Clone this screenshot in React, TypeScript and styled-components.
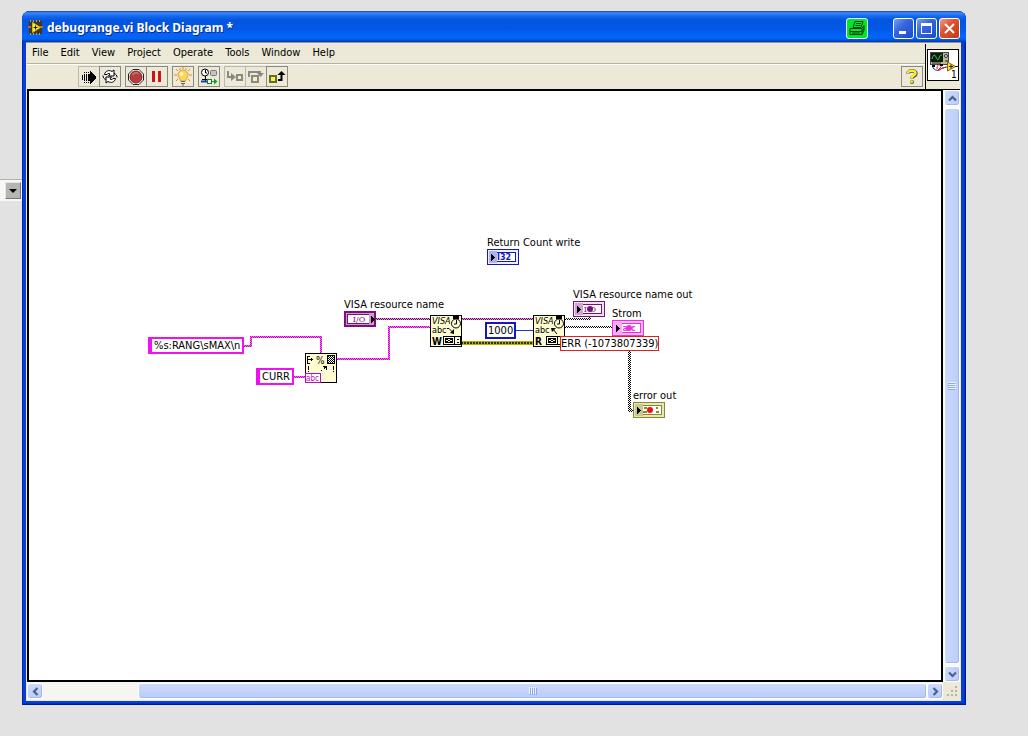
import React from "react";
import styled, { createGlobalStyle, css } from "styled-components";

const Global = createGlobalStyle`
  * { box-sizing: border-box; }
  body { margin: 0; background: #e2e2e2; }
  body, button { font-family: "DejaVu Sans Condensed", Tahoma, Verdana, sans-serif; font-size: 11px; color: #000; }
  button { margin: 0; padding: 0; border: 0; background: none; }
  svg { display: block; }
`;

const Desktop = styled.div`
  display: grid;
  grid-template-columns: 22px minmax(0, 1fr) 62px;
  min-height: 100vh;
  overflow: hidden;
`;

const Behind = styled.aside`
  padding-top: 179px;
`;

const ComboEdge = styled.div`
  display: flex;
  justify-content: flex-end;
  height: 22px;
  padding: 2px 1px 2px 0;
  border-top: 1px solid #b4b2ae;
  background: #f8f8f8;
`;

const ComboButton = styled.button`
  display: grid;
  place-items: center;
  width: 16px;
  height: 17px;
  border: 1px solid #77756f;
  border-top-color: #e8e6e0;
  border-left-color: #e8e6e0;
  background: #b7b5b0;
`;

const Window = styled.main`
  display: flex;
  flex-direction: column;
  margin: 11px 0 31px;
  padding: 0 5px 4px 4px;
  border-radius: 8px 8px 0 0;
  background: #0a3fd6;
  box-shadow: inset 1px 0 #0026b8, inset -1px -1px #001a94, inset -2px -2px #0030c4;
`;

const TitleBar = styled.header`
  display: flex;
  align-items: center;
  height: 31px;
  margin: 0 -5px 0 -4px;
  padding: 3px 6px 0 6px;
  border-radius: 8px 8px 0 0;
  background: linear-gradient(#0a4bc4 0, #3b8bfa 2px, #1768ee 5px, #0355de 9px, #0358e6 18px, #0266fb 25px, #0160f2 28px, #0145c0 30px, #0138a8 31px);
`;

const Title = styled.h1`
  flex: 1;
  margin: 0 0 0 4px;
  color: #fff;
  font: bold 12px/16px "Noto Sans", "Trebuchet MS", sans-serif;
  text-shadow: 1px 1px #0a2a88;
`;

const CaptionButtons = styled.div`
  display: flex;
  gap: 2px;
  margin-left: 25px;
`;

const CaptionButton = styled.button<{ $danger?: boolean }>`
  display: grid;
  place-items: center;
  width: 21px;
  height: 21px;
  border: 1px solid #fff;
  border-radius: 3px;
  background: ${(p) =>
    p.$danger
      ? "linear-gradient(135deg, #f0a088, #dc5433 40%, #c23a16)"
      : "linear-gradient(135deg, #7c9ff2, #3566e0 40%, #1d4bcb)"};
`;

const PrintBadge = styled.button`
  display: grid;
  place-items: center;
  width: 22px;
  height: 21px;
  border: 1px solid #e8ffe8;
  border-radius: 3px;
  background: #00e62c;
`;

const Client = styled.div`
  flex: 1;
  display: flex;
  flex-direction: column;
  padding: 1px;
  background: #ece9d8;
  border-top: 1px solid #8d93a8;
`;

const Head = styled.div`
  display: flex;
  height: 45px;
`;

const Bars = styled.div`
  flex: 1;
  min-width: 0;
`;

const MenuBar = styled.nav`
  display: flex;
  gap: 12px;
  height: 20px;
  padding: 0 5px 1px;
  border-bottom: 1px solid #b5b2a3;
`;

const MenuItem = styled.button`
  line-height: 18px;
  white-space: nowrap;
`;

const ToolBar = styled.div`
  display: flex;
  gap: 4px;
  height: 25px;
  padding: 1px 2px 2px 51px;
  border-top: 1px solid #fff;
`;

const ToolGroup = styled.div<{ $end?: boolean }>`
  display: flex;
  ${(p) => p.$end && css`margin-left: auto;`}
`;

const ToolButton = styled.button<{ $flat?: boolean }>`
  display: grid;
  place-items: center;
  width: 22px;
  height: 21px;
  border: 1px solid ${(p) => (p.$flat ? "#bcb9a9" : "#8c8a7e")};
  & + & { margin-left: -1px; }
`;

const IconPane = styled.div`
  width: 35px;
  padding: 5px 1px;
  border-left: 1px solid #000;
`;

const ViIcon = styled.div`
  height: 32px;
  border: 1px solid #000;
  background: #fff;
`;

const Work = styled.div`
  flex: 1;
  display: grid;
  grid-template-columns: minmax(0, 1fr) 17px;
  grid-template-rows: minmax(0, 1fr) 18px;
`;

const Canvas = styled.section`
  position: relative;
  min-height: 340px;
  overflow: hidden;
  border: 2px solid #000;
  background: #fff;
`;

const VBar = styled.div`
  display: grid;
  grid-template-rows: 16px 1fr 16px;
  gap: 2px;
  padding-left: 1px;
  background: #f8f8f4;
  border-top: 1px solid #000;
`;

const HBar = styled.div`
  display: grid;
  grid-template-columns: 16px 108fr 892fr 16px;
  padding: 1px 0;
  background: #f6f5ef;
`;

const ScrollPart = styled.button<{ $wide?: boolean }>`
  display: grid;
  place-items: center;
  border: 1px solid #fff;
  border-radius: 3px;
  background: ${(p) => (p.$wide ? "linear-gradient(#cbd9fe, #bccdfb)" : "linear-gradient(90deg, #cbd9fe, #bccdfb)")};
  box-shadow: inset -1px -1px #a5b9ec;
`;

const Corner = styled.div`
  display: flex;
  align-items: flex-end;
  justify-content: flex-end;
  padding: 2px 1px;
`;

const Wires = styled.svg`
  position: absolute;
  inset: 0;
  width: 100%;
  height: 100%;
`;

const Item = styled.div<{ $x: number; $y: number }>`
  position: absolute;
  left: ${(p) => p.$x}px;
  top: ${(p) => p.$y}px;
  white-space: nowrap;
`;

const Label = styled(Item)`
  line-height: 14px;
`;

const Constant = styled(Item)<{ $color: string; $string?: boolean }>`
  padding: 0 ${(p) => (p.$string ? 2 : 1)}px;
  border: 2px solid ${(p) => p.$color};
  border-left-width: ${(p) => (p.$string ? 4 : 2)}px;
  background: #fff;
  line-height: 13px;
`;

const ErrorProbe = styled(Item)`
  border: 1px solid #e02020;
  background: #fff;
  line-height: 13px;
`;

const serif = "DejaVu Serif, serif";
const sans = "DejaVu Sans Condensed, sans-serif";

type TerminalProps = {
  color: string;
  tint: string;
  rim: string;
  text?: string;
  control?: boolean;
  dot?: string;
  bold?: boolean;
  children?: React.ReactNode;
};

function Terminal({ color, tint, rim, text, control, dot, bold, children }: TerminalProps) {
  const edge = control ? 2 : 1;
  return (
    <svg width="32" height="16" shapeRendering="crispEdges">
      <rect width="32" height="16" fill={color} />
      <rect x={edge} y={edge} width={32 - 2 * edge} height={16 - 2 * edge} fill={rim} />
      <rect x="3" y="3" width="26" height="10" fill={color} />
      <rect x="4" y="4" width="24" height="8" fill="#fff" />
      {control ? (
        <>
          <rect x="25" y="3" width="5" height="10" fill={tint} />
          <path d="M27 5v7l4-3.500z" fill="#000" />
        </>
      ) : (
        <>
          <rect x="2" y="2" width="8" height="12" fill={tint} />
          <path d="M4 5v7l4-3.500z" fill="#000" />
        </>
      )}
      {text && (
        <text
          x={control ? 15 : 17}
          y="11"
          textAnchor="middle"
          fontFamily={bold ? "DejaVu Sans, sans-serif" : serif}
          fontSize="8"
          fontWeight={bold ? 700 : 400}
          fill={color}
        >
          {text}
        </text>
      )}
      {children}
      {dot && <circle cx="17" cy="8" r="3" fill={dot} shapeRendering="auto" />}
    </svg>
  );
}

function VisaNode({ mode }: { mode: "W" | "R" }) {
  return (
    <svg width="32" height="32">
      <rect x="0.5" y="0.5" width="31" height="31" fill="#fdfbd0" stroke="#000" />
      <text x="2" y="9" fontFamily={sans} fontStyle="italic" fontSize="9">VISA</text>
      <text x="2" y="18" fontFamily={sans} fontSize="9">abc</text>
      <text x="2" y="30" fontFamily={sans} fontWeight="700" fontSize="10">{mode}</text>
      <path d="M23 1h6v3h-6z" />
      <circle cx="26" cy="8.500" r="4.500" fill="#fdfbd0" stroke="#000" />
      <path d="M26.500 5v4H24" fill="none" stroke="#000" />
      {mode === "W" ? (
        <>
          <path d="M17 13.500h2l3 3" fill="none" stroke="#000" />
          <path d="M24 14v5l-4-1z" />
        </>
      ) : (
        <>
          <path d="M20 14l4 5" fill="none" stroke="#000" />
          <path d="M18 13h5l-4 4z" />
        </>
      )}
      <g fill="none" stroke="#000" shapeRendering="crispEdges">
        <path d="M13.500 21.500h17v8h-17zM15.500 23.500h7v4h-7zM24.500 22v7" />
        <path d="M16 24l6 3M16 27l6-3M27 24h2M27 27h2" />
      </g>
    </svg>
  );
}

function FormatNode() {
  return (
    <svg width="32" height="30">
      <rect x="0.5" y="0.5" width="31" height="29" fill="#fdfbd0" stroke="#000" />
      <g shapeRendering="crispEdges">
        <path d="M2 3h3v1H3v6h2v1H2zM3 6h5v1H3zM6 5h1v3H6z" />
        <rect x="22" y="3" width="8" height="8" fill="url(#checkBlack)" />
        <path d="M22.500 2.500h7v8h-7z" fill="none" stroke="#000" />
        <path d="M3 13h1v4H3zM3 18h1v1H3zM28 13h1v4h-1zM28 18h1v1h-1zM18 13h4v4h-1v-2h-1v1h-1v-2h-1zM16 17h1v1h-1z" />
      </g>
      <text x="11" y="11" fontFamily={sans} fontSize="10">%</text>
      <rect x="0.5" y="20.5" width="15" height="9" fill="#fff" stroke="#b010b0" />
      <text x="1" y="28" fontFamily={sans} fontSize="8" fill="#c010c0">abc</text>
    </svg>
  );
}

const checks: [string, string, string][] = [
  ["checkBlack", "#000", "#fff"],
  ["checkPink", "#c800c8", "#f070f0"],
  ["checkPurple", "#6a006a", "#cf9bcf"],
];

function Diagram() {
  return (
    <Canvas aria-label="Block diagram">
      <Wires shapeRendering="crispEdges">
        <defs>
          {checks.map(([id, a, b]) => (
            <pattern key={id} id={id} width="2" height="2" patternUnits="userSpaceOnUse">
              <rect width="2" height="2" fill={b} />
              <path d="M0 0h1v1H0zM1 1h1v1H1z" fill={a} />
            </pattern>
          ))}
          <pattern id="errorWire" width="3" height="4" y="250" patternUnits="userSpaceOnUse">
            <rect width="3" height="4" fill="#b8b000" />
            <rect width="2" height="2" y="1" fill="#33330a" />
          </pattern>
        </defs>
        <g fill="none" strokeWidth="2">
          <path d="M215 255h7v-9h70v17M263 286h14M308 268h52v-32h41" stroke="url(#checkPink)" />
          <path d="M347 228h54M433 228h71" stroke="url(#checkPurple)" />
          <path d="M536 228h25v-3M536 236h47" stroke="url(#checkBlack)" />
          <path d="M600 258v61h5" stroke="url(#checkBlack)" strokeWidth="3" />
          <path d="M487 239.500h17" stroke="#2030e0" strokeWidth="1" />
        </g>
        <path d="M433 250h71v4h-71z" fill="url(#errorWire)" />
      </Wires>

      <Label $x={458} $y={145}>Return Count write</Label>
      <Item $x={458} $y={158}><Terminal color="#1a1ab0" tint="#b0b0ec" rim="#eeeeff" text="I32" bold /></Item>

      <Label $x={315} $y={207}>VISA resource name</Label>
      <Item $x={315} $y={220}><Terminal color="#7a107a" tint="#cf9bcf" rim="#cf9bcf" text="I/O" control /></Item>

      <Constant $x={119} $y={246} $color="#f010f0" $string>%s:RANG\sMAX\n</Constant>
      <Constant $x={227} $y={277} $color="#f010f0" $string>CURR</Constant>
      <Item $x={276} $y={262}><FormatNode /></Item>

      <Item $x={401} $y={224}><VisaNode mode="W" /></Item>
      <Constant $x={456} $y={231} $color="#1515c8">1000</Constant>
      <Item $x={504} $y={224}><VisaNode mode="R" /></Item>

      <Label $x={544} $y={197}>VISA resource name out</Label>
      <Item $x={544} $y={210}><Terminal color="#7a107a" tint="#d0a4d0" rim="#f2e0f2" text="I O" dot="#7a107a" /></Item>
      <Label $x={583} $y={216}>Strom</Label>
      <Item $x={583} $y={229}><Terminal color="#e832e0" tint="#f8a8f4" rim="#fbbcf8" text="a c" dot="#e832e0" bold /></Item>
      <ErrorProbe $x={531} $y={245}>ERR (-1073807339)</ErrorProbe>

      <Label $x={604} $y={298}>error out</Label>
      <Item $x={604} $y={311}>
        <Terminal color="#8a8a2a" tint="#c8c890" rim="#e6e6b8" dot="#f01010">
          <path d="M11 5h3v2h-3zM10 9h4v2h-4zM23 5h2v2h-2zM23 9h3v2h-3z" fill="#8a8a2a" />
        </Terminal>
      </Item>
    </Canvas>
  );
}

function Chevron({ turn }: { turn: number }) {
  return (
    <svg width="9" height="9" viewBox="0 0 9 9">
      <path d="M1 6.500 4.500 3 8 6.500" fill="none" stroke="#4d6185" strokeWidth="2.200" transform={`rotate(${turn} 4.500 4.500)`} />
    </svg>
  );
}

function Ridges({ vertical }: { vertical?: boolean }) {
  return (
    <svg width="8" height="8" shapeRendering="crispEdges">
      <g transform={vertical ? "rotate(90 4 4)" : undefined}>
        <path d="M0 0h1v7H0zM2 0h1v7H2zM4 0h1v7H4zM6 0h1v7H6z" fill="#eef4fe" />
        <path d="M1 1h1v7H1zM3 1h1v7H3zM5 1h1v7H5zM7 1h1v7H7z" fill="#8caae6" />
      </g>
    </svg>
  );
}

const RunIcon = () => (
  <svg width="18" height="16" shapeRendering="crispEdges">
    <path d="M2 6h1v5H2zM4 5h1v7H4zM6 5h1v7H6zM8 5h2V2l6 6v1l-6 6v-3H8zM4 3h1v1H4zM6 3h1v1H6zM8 3h1v1H8zM4 13h1v1H4zM6 13h1v1H6zM8 13h1v1H8z" />
  </svg>
);
const LoopIcon = () => (
  <svg width="18" height="17" fill="#fff" stroke="#000">
    <path d="M3.500 6.500C4 3 8 1.500 11 3.500l2-1.500v6H7.500l1.500-2C7.500 5 6.500 5.500 6 6.500z" />
    <path d="M14.500 10.500c-.5 3.500-4.500 5-7.500 3l-2 1.500V9h5.500L9 11c1.500 1 2.500.5 3-.5z" />
    <path d="M13 5.500c2 .5 3 2 3 4M5 11.500c-2-.5-3-2-3-4" fill="none" />
  </svg>
);
const AbortIcon = () => (
  <svg width="18" height="18">
    <path d="M6 1.500h6L16.500 6v6L12 16.500H6L1.500 12V6z" fill="#fff" stroke="#222" />
    <circle cx="9" cy="9" r="6" fill="#b93c3c" stroke="#7a2020" />
    <path d="M5.500 7a4 4 0 0 1 6-1.500" fill="none" stroke="#e39a9a" />
  </svg>
);
const PauseIcon = () => (
  <svg width="12" height="11"><path d="M1 0h3v11H1zM7 0h3v11H7z" fill="#cc1414" /></svg>
);
const BulbIcon = () => (
  <svg width="20" height="19">
    <path d="M3 2l2 2M17 2l-2 2M1 8h3M16 8h3M3 14l2-2M17 14l-2-2M10 0v2M7 1v2M13 1v2" stroke="#e08a20" />
    <path d="M10 3a5 5 0 0 0-5 5c0 2.500 2.500 3.500 2.500 6h5c0-2.500 2.500-3.500 2.500-6a5 5 0 0 0-5-5z" fill="#ffd45c" stroke="#e8a030" />
    <circle cx="8.500" cy="7" r="2" fill="#fff6c8" />
    <path d="M8 14.500h4M8 16.500h4M9 18h2" stroke="#666" />
  </svg>
);
const RetainIcon = () => (
  <svg width="18" height="17">
    <circle cx="5" cy="4.500" r="3.500" fill="#fff" stroke="#000" />
    <path d="M5.500 2v3H7M5.500 8v6M2 11.500h6" fill="none" stroke="#000" />
    <rect x="10.500" y="2.500" width="6" height="5" rx="1" fill="#c4c4c0" stroke="#777" />
    <path d="M1 13.500h7" stroke="#1a3ac0" strokeWidth="2" />
    <rect x="7.500" y="11.500" width="4" height="4" fill="#eaffea" stroke="#108020" />
    <path d="M12 13h2v-2.500l3.500 3L14 16.500V14h-2z" fill="#10a020" />
  </svg>
);
const StepIntoIcon = () => (
  <svg width="18" height="16">
    <path d="M2 2v6h4" fill="none" stroke="#8c8a80" strokeWidth="2" />
    <path d="M5 4l5 4-5 4z" fill="#8c8a80" />
    <rect x="11" y="6" width="5" height="5" fill="#f2f2c0" stroke="#8c8a80" strokeWidth="2" />
  </svg>
);
const StepOverIcon = () => (
  <svg width="18" height="16">
    <path d="M2 8V3h11" fill="none" stroke="#8c8a80" strokeWidth="2" />
    <path d="M10 4h7l-3.500 4zM12 2h2v3h-2z" fill="#8c8a80" />
    <rect x="5" y="7" width="6" height="6" fill="#f2f2c0" stroke="#8c8a80" strokeWidth="2" />
  </svg>
);
const StepOutIcon = () => (
  <svg width="18" height="16">
    <rect x="2" y="7" width="6" height="6" fill="#f4f450" stroke="#6a6a20" strokeWidth="2" />
    <path d="M10 11h3.500V5" fill="none" stroke="#000" strokeWidth="2" />
    <path d="M9.500 6l4-4 4 4z" />
  </svg>
);
const HelpIcon = () => (
  <svg width="14" height="17" fill="none" strokeLinejoin="round">
    <path d="M3 5.500C3 2 11 2 11 5.500c0 3-4 2.500-4 5" stroke="#555" strokeWidth="3.600" />
    <circle cx="7" cy="14" r="2" fill="#555" />
    <path d="M3 5.200C3 1.700 10.500 2 10.500 5.200c0 2.500-3.800 2.300-3.800 5" stroke="#ffef1a" strokeWidth="2.400" />
    <circle cx="6.700" cy="13.700" r="1.400" fill="#ffef1a" />
  </svg>
);
const PrinterIcon = () => (
  <svg width="18" height="16" fill="none" stroke="#043c0a">
    <path d="M5 7.500L7 1.500h8L13 7.500zM8 3.500h5M7.500 5.500h5" />
    <path d="M2 8.500h12l2-3v5l-2 4H2zM14 8.500v6M2 11.500h12l2-3M4 13h8" />
  </svg>
);
const AppIcon = () => (
  <svg width="15" height="16">
    <rect x="1" y="1" width="13" height="13" fill="#3b3a20" />
    <path d="M2.500 0v2M5.500 0v2M8.500 0v2M11.500 0v2M2.500 13v2M5.500 13v2M8.500 13v2M11.500 13v2" stroke="#c9a04a" />
    <path d="M0 7h3M12 7h3" stroke="#e05a20" strokeWidth="2" />
    <path d="M4.500 2.500l8 5-8 5z" fill="#ffe93b" stroke="#c8b820" />
    <path d="M5.500 7.500h4M7.500 5.500v4" stroke="#222" />
  </svg>
);
const ScopeIcon = () => (
  <svg width="31" height="30">
    <rect x="2.500" y="2.500" width="18" height="12" fill="#b9b9a0" stroke="#444" />
    <rect x="3" y="3" width="12" height="9" fill="#0c1c0c" />
    <path d="M4 9q2-7 4-2t3 1 3-3" fill="none" stroke="#35c040" />
    <circle cx="18" cy="6" r="1.500" fill="#fff" stroke="#222" />
    <path d="M17 11h3M4 13h9" stroke="#222" />
    <path d="M5 15v3q5 5 9 0l5-1" fill="none" stroke="#2430b0" />
    <path d="M9 19q0-5 3-4t-2 5l8-3" fill="none" stroke="#d02020" />
    <path d="M4 16h3M12 15h3" stroke="#000" strokeWidth="2" />
    <path d="M19.500 12l8 4.500-8 4.500z" fill="#ffe020" stroke="#806a00" />
    <path d="M21 16.500h4M23 14.500v4M27 16.500h4" stroke="#222" />
    <text x="23" y="28" fontFamily={sans} fontSize="10">1</text>
  </svg>
);

const menus = ["File", "Edit", "View", "Project", "Operate", "Tools", "Window", "Help"];

const toolGroups: { name: string; icon: React.ReactNode; flat?: boolean }[][] = [
  [{ name: "Run", icon: <RunIcon />, flat: true }, { name: "Run continuously", icon: <LoopIcon /> }],
  [{ name: "Abort", icon: <AbortIcon /> }, { name: "Pause", icon: <PauseIcon /> }],
  [{ name: "Highlight execution", icon: <BulbIcon /> }],
  [{ name: "Retain wire values", icon: <RetainIcon /> }],
  [
    { name: "Step into", icon: <StepIntoIcon />, flat: true },
    { name: "Step over", icon: <StepOverIcon />, flat: true },
    { name: "Step out", icon: <StepOutIcon /> },
  ],
];

export default function App() {
  return (
    <Desktop>
      <Global />
      <Behind>
        <ComboEdge>
          <ComboButton aria-label="Open list">
            <svg width="8" height="4"><path d="M0 0h8L4 4z" /></svg>
          </ComboButton>
        </ComboEdge>
      </Behind>
      <Window>
        <TitleBar>
          <AppIcon />
          <Title>debugrange.vi Block Diagram *</Title>
          <PrintBadge aria-label="Print"><PrinterIcon /></PrintBadge>
          <CaptionButtons>
            <CaptionButton aria-label="Minimize">
              <svg width="13" height="13"><path d="M2 9h7v3H2z" fill="#fff" /></svg>
            </CaptionButton>
            <CaptionButton aria-label="Maximize">
              <svg width="13" height="13"><path d="M1 1h11v11H1zM2 4v7h9V4z" fill="#fff" fillRule="evenodd" /></svg>
            </CaptionButton>
            <CaptionButton aria-label="Close" $danger>
              <svg width="13" height="13"><path d="M2 2l9 9M11 2l-9 9" stroke="#fff" strokeWidth="2" /></svg>
            </CaptionButton>
          </CaptionButtons>
        </TitleBar>
        <Client>
          <Head>
            <Bars>
              <MenuBar>
                {menus.map((m) => <MenuItem key={m}>{m}</MenuItem>)}
              </MenuBar>
              <ToolBar>
                {toolGroups.map((group, i) => (
                  <ToolGroup key={i}>
                    {group.map((t) => (
                      <ToolButton key={t.name} aria-label={t.name} $flat={t.flat}>{t.icon}</ToolButton>
                    ))}
                  </ToolGroup>
                ))}
                <ToolGroup $end>
                  <ToolButton aria-label="Context help"><HelpIcon /></ToolButton>
                </ToolGroup>
              </ToolBar>
            </Bars>
            <IconPane><ViIcon><ScopeIcon /></ViIcon></IconPane>
          </Head>
          <Work>
            <Diagram />
            <VBar>
              <ScrollPart aria-label="Scroll up"><Chevron turn={0} /></ScrollPart>
              <ScrollPart aria-label="Vertical position"><Ridges vertical /></ScrollPart>
              <ScrollPart aria-label="Scroll down"><Chevron turn={180} /></ScrollPart>
            </VBar>
            <HBar>
              <ScrollPart $wide aria-label="Scroll left"><Chevron turn={270} /></ScrollPart>
              <span />
              <ScrollPart $wide aria-label="Horizontal position"><Ridges /></ScrollPart>
              <ScrollPart $wide aria-label="Scroll right"><Chevron turn={90} /></ScrollPart>
            </HBar>
            <Corner>
              <svg width="12" height="12" fill="#b8b4a2" shapeRendering="crispEdges">
                <path d="M8 0h2v2H8zM4 4h2v2H4zM8 4h2v2H8zM0 8h2v2H0zM4 8h2v2H4zM8 8h2v2H8z" />
              </svg>
            </Corner>
          </Work>
        </Client>
      </Window>
    </Desktop>
  );
}
